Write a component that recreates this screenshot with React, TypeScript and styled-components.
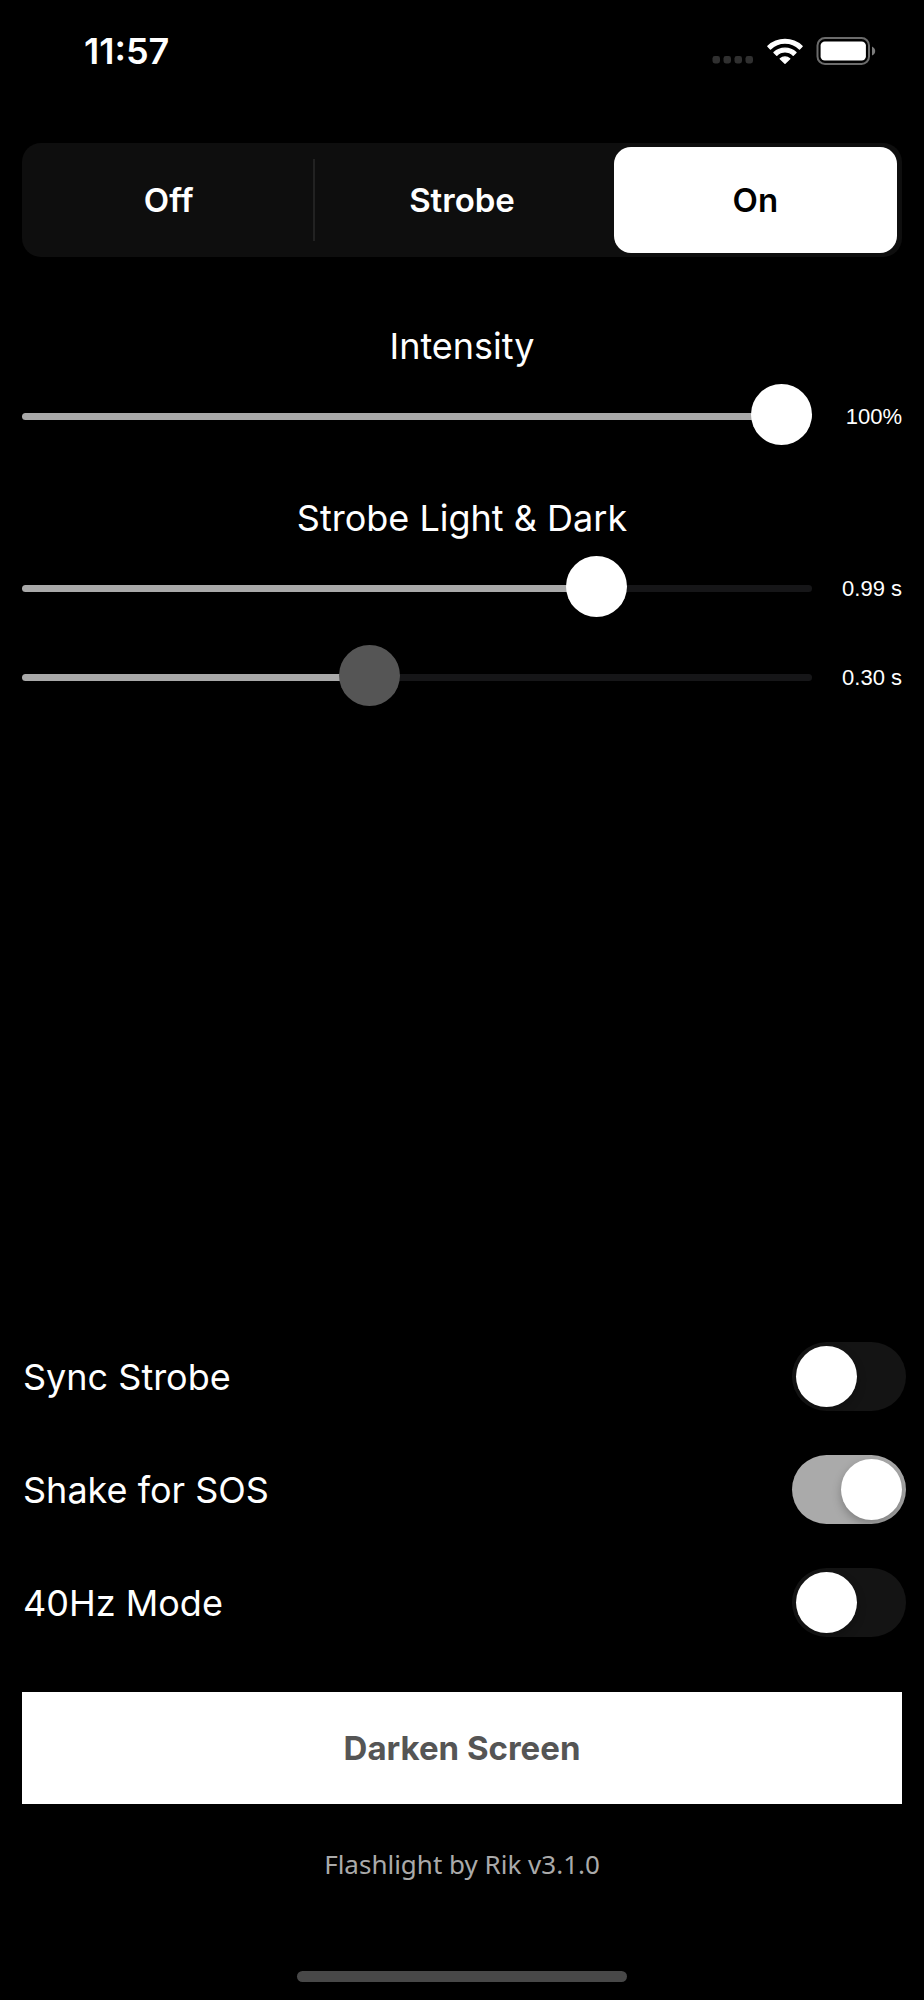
import React, { useState } from "react";
import styled, { createGlobalStyle, css } from "styled-components";

const GlobalStyle = createGlobalStyle`
  *, *::before, *::after { box-sizing: border-box; }
  body {
    margin: 0;
    background: #000;
    color: #fff;
    font-family: Inter, "Liberation Sans", sans-serif;
  }
`;

const Screen = styled.div`
  display: flex;
  flex-direction: column;
  min-height: 100vh;
  padding: 0 22px 18px;
`;

const StatusBar = styled.header`
  display: flex;
  align-items: center;
  justify-content: space-between;
  height: 101px;
  margin-bottom: 42px;
  padding: 0 26px 0 62px;
`;

const Clock = styled.time`
  font-size: 36px;
  line-height: 40px;
  font-weight: 600;
`;

const StatusIcons = styled.div`
  display: flex;
  align-items: center;
  gap: 13px;
`;

const Segments = styled.div`
  display: grid;
  grid-template-columns: repeat(3, 1fr);
  height: 114px;
  border-radius: 19px;
  background: #0e0e0e;
`;

const Segment = styled.button<{ $active: boolean; $divided: boolean }>`
  position: relative;
  margin: 4px 5px;
  padding: 0;
  border: 0;
  border-radius: 17px;
  background: transparent;
  color: #fff;
  font: 600 33px/40px Inter, "Liberation Sans", sans-serif;
  cursor: pointer;

  ${({ $active }) =>
    $active &&
    css`
      background: #fff;
      color: #000;
    `}

  ${({ $divided }) =>
    $divided &&
    css`
      &::after {
        content: "";
        position: absolute;
        top: 12px;
        bottom: 12px;
        right: -5px;
        width: 2px;
        background: #222;
      }
    `}
`;

const Group = styled.section`
  display: flex;
  flex-direction: column;
  gap: 28px;
  margin-top: 66px;

  & + & {
    margin-top: 48px;
  }
`;

const Title = styled.h2`
  margin: 0 0 -11px;
  text-align: center;
  font-size: 36px;
  line-height: 46px;
  font-weight: 400;
`;

const SliderRow = styled.div`
  display: flex;
  align-items: center;
  height: 61px;
`;

const Range = styled.input<{ $thumb: string }>`
  appearance: none;
  flex: 1;
  min-width: 0;
  height: 61px;
  margin: 0;
  background: transparent;
  cursor: pointer;

  &::-webkit-slider-runnable-track {
    height: 7px;
    border-radius: 4px;
    background: linear-gradient(to right, #a9a9a9 var(--fill), #161618 var(--fill));
  }

  &::-webkit-slider-thumb {
    appearance: none;
    width: 61px;
    height: 61px;
    margin-top: -29px;
    border-radius: 50%;
    background: ${({ $thumb }) => $thumb};
  }
`;

const Value = styled.output`
  width: 90px;
  text-align: right;
  font: 400 22px/28px "Liberation Sans", Arial, sans-serif;
`;

const Toggles = styled.section`
  display: flex;
  flex-direction: column;
  gap: 44px;
  margin-top: auto;
  padding-top: 60px;
`;

const ToggleRow = styled.label`
  display: flex;
  align-items: center;
  justify-content: space-between;
  height: 69px;
  margin-right: -4px;
  padding-left: 1px;
  font-size: 36px;
  line-height: 46px;
  cursor: pointer;
`;

const Switch = styled.input`
  appearance: none;
  display: flex;
  width: 114px;
  height: 69px;
  margin: 0;
  padding: 4px;
  border-radius: 35px;
  background: #141414;
  cursor: pointer;

  &::before {
    content: "";
    width: 61px;
    height: 61px;
    border-radius: 50%;
    background: #fff;
    box-shadow: 0 4px 10px rgba(0, 0, 0, 0.25);
  }

  &:checked {
    justify-content: flex-end;
    background: #aaa;
  }
`;

const DarkenButton = styled.button`
  height: 112px;
  margin-top: 55px;
  padding: 0;
  border: 0;
  background: #fff;
  color: #555;
  font: 700 33px/40px Inter, "Liberation Sans", sans-serif;
  cursor: pointer;
`;

const Credit = styled.p`
  margin: 42px 0 89px;
  text-align: center;
  color: #aaa;
  font: 400 26px/36px "Noto Sans", "Open Sans", sans-serif;
`;

const HomeBar = styled.div`
  align-self: center;
  width: 330px;
  height: 11px;
  border-radius: 6px;
  background: #484848;
`;

function SignalDots() {
  return (
    <svg width="42" height="26" viewBox="0 0 42 26" aria-hidden="true">
      {[0, 11, 22, 33].map((x) => (
        <rect key={x} x={x + 0.5} y="18" width="7.5" height="7.5" rx="2.4" fill="#303030" />
      ))}
    </svg>
  );
}

function WifiIcon() {
  return (
    <svg width="36" height="26" viewBox="0 0 36 26" aria-hidden="true">
      <g fill="#fff" stroke="#fff" strokeWidth="1.4" strokeLinejoin="round">
        <path d="M0.9 8.2A25.2 25.2 0 0 1 35.1 8.2L32.5 10.9A20.6 20.6 0 0 0 3.5 10.9Z" />
        <path d="M7 14.6A15.8 15.8 0 0 1 29 14.6L26.2 17.2A11.8 11.8 0 0 0 9.8 17.2Z" />
        <path d="M13.3 20.7A7 7 0 0 1 22.7 20.7L18 25.3Z" />
      </g>
    </svg>
  );
}

function BatteryIcon() {
  return (
    <svg width="60" height="28" viewBox="0 0 60 28" aria-hidden="true">
      <rect x="1.5" y="1" width="51.5" height="26" rx="7.5" fill="none" stroke="#6b6b6b" strokeWidth="2" />
      <rect x="4.6" y="4.4" width="45.3" height="19.2" rx="4.2" fill="#fff" />
      <path d="M56 9.4Q59.2 11 59.2 14T56 18.6Z" fill="#7c7c7c" />
    </svg>
  );
}

interface SliderProps {
  label: string;
  initial: number;
  thumb?: string;
  format: (value: number) => string;
}

function Slider({ label, initial, thumb = "#fff", format }: SliderProps) {
  const [value, setValue] = useState(initial);
  return (
    <SliderRow>
      <Range
        type="range"
        min={0}
        max={1000}
        value={value}
        aria-label={label}
        $thumb={thumb}
        style={{ "--fill": `${value / 10}%` } as React.CSSProperties}
        onChange={(e) => setValue(Number(e.target.value))}
      />
      <Value>{format(value)}</Value>
    </SliderRow>
  );
}

const modes = ["Off", "Strobe", "On"];

const options = [
  { label: "Sync Strobe", on: false },
  { label: "Shake for SOS", on: true },
  { label: "40Hz Mode", on: false },
];

export default function App() {
  const [mode, setMode] = useState(2);
  return (
    <>
      <GlobalStyle />
      <Screen>
        <StatusBar>
          <Clock>11:57</Clock>
          <StatusIcons>
            <SignalDots />
            <WifiIcon />
            <BatteryIcon />
          </StatusIcons>
        </StatusBar>

        <Segments role="group" aria-label="Light mode">
          {modes.map((name, i) => (
            <Segment
              key={name}
              type="button"
              aria-pressed={mode === i}
              $active={mode === i}
              $divided={i < 2 && mode !== i && mode !== i + 1}
              onClick={() => setMode(i)}
            >
              {name}
            </Segment>
          ))}
        </Segments>

        <Group>
          <Title>Intensity</Title>
          <Slider label="Intensity" initial={1000} format={(v) => `${Math.round(v / 10)}%`} />
        </Group>

        <Group>
          <Title>Strobe Light &amp; Dark</Title>
          <Slider label="Strobe light time" initial={746} format={(v) => `${((v / 746) * 0.99).toFixed(2)} s`} />
          <Slider
            label="Strobe dark time"
            initial={435}
            thumb="#555"
            format={(v) => `${((v / 435) * 0.3).toFixed(2)} s`}
          />
        </Group>

        <Toggles>
          {options.map(({ label, on }) => (
            <ToggleRow key={label}>
              {label}
              <Switch type="checkbox" role="switch" defaultChecked={on} />
            </ToggleRow>
          ))}
        </Toggles>

        <DarkenButton type="button">Darken Screen</DarkenButton>
        <Credit>Flashlight by Rik v3.1.0</Credit>
        <HomeBar />
      </Screen>
    </>
  );
}
